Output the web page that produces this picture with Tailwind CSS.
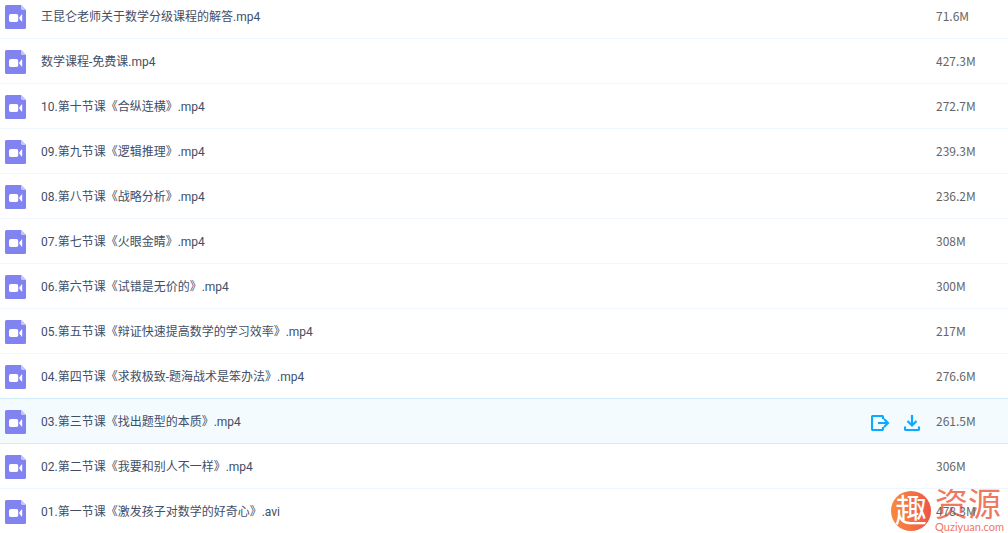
<!DOCTYPE html>
<html lang="zh-CN">
<head>
    <meta charset="UTF-8">
    <meta name="viewport" content="width=device-width, initial-scale=1.0">
    <title>数学课程 - 文件列表</title>
    <script src="https://cdn.jsdelivr.net/npm/@tailwindcss/browser@4"></script>
</head>
<body class="relative h-screen overflow-hidden bg-white font-[Roboto,'Noto_Sans_CJK_SC',sans-serif] text-xs text-[#424e67]">

    <!-- Shared icon shapes -->
    <svg class="hidden">
        <symbol id="video" viewBox="0 0 21 24">
            <path d="M1.500 0H16l5 5v17.500a1.500 1.500 0 0 1-1.500 1.500h-18A1.500 1.500 0 0 1 0 22.500V1.500A1.500 1.500 0 0 1 1.500 0z" fill="#8183f1"/>
            <path d="M16 0l5 5h-3.500A1.500 1.500 0 0 1 16 3.500z" fill="#c5c6fa"/>
            <rect x="4" y="9" width="9.200" height="8" rx="1.800" fill="#fff"/>
            <path d="M14 13l2.500-3.500h.7V16.500h-.7z" fill="#fff"/>
        </symbol>
    </svg>

    <!-- The list is scrolled a little under the top edge -->
    <table class="relative z-10 -mt-1.5 w-full table-fixed border-separate border-spacing-0">
        <colgroup>
            <col class="w-[41px]">
            <col>
            <col class="w-[72px]">
            <col class="w-[72px]">
        </colgroup>
        <tbody id="fileList"></tbody>
    </table>

    <!-- Site watermark, behind the list -->
    <div class="pointer-events-none absolute right-1 bottom-0 flex items-center gap-1 text-[#f0785f]">
        <div class="flex size-10 items-center justify-center rounded-full bg-linear-to-r from-[#f88a3c] to-[#ee5548] text-[32px] leading-10 text-white">趣</div>
        <div class="flex flex-col">
            <span class="text-[33px] leading-8">资源</span>
            <span class="font-[Lato,sans-serif] text-[11px] leading-3">Quziyuan.com</span>
        </div>
    </div>

    <script>
        const files = [
            { name: '王昆仑老师关于数学分级课程的解答.mp4', size: '71.6M' },
            { name: '数学课程-免费课.mp4', size: '427.3M' },
            { name: '10.第十节课《合纵连横》.mp4', size: '272.7M' },
            { name: '09.第九节课《逻辑推理》.mp4', size: '239.3M' },
            { name: '08.第八节课《战略分析》.mp4', size: '236.2M' },
            { name: '07.第七节课《火眼金睛》.mp4', size: '308M' },
            { name: '06.第六节课《试错是无价的》.mp4', size: '300M' },
            { name: '05.第五节课《辩证快速提高数学的学习效率》.mp4', size: '217M' },
            { name: '04.第四节课《求救极致-题海战术是笨办法》.mp4', size: '276.6M' },
            { name: '03.第三节课《找出题型的本质》.mp4', size: '261.5M', active: true },
            { name: '02.第二节课《我要和别人不一样》.mp4', size: '306M' },
            { name: '01.第一节课《激发孩子对数学的好奇心》.avi', size: '478.3M' },
        ];

        const actions = `
            <div class="flex items-center gap-3.5 pl-[7px] text-[#09aaff]">
                <button type="button" aria-label="分享" class="cursor-pointer">
                    <svg class="h-4 w-[19px]" viewBox="0 0 19 16" fill="none" stroke="currentColor" stroke-width="2.200">
                        <path d="M12 4V2a1 1 0 0 0-1-1H2a1 1 0 0 0-1 1v12a1 1 0 0 0 1 1h9a1 1 0 0 0 1-1v-2M7 8h10M13 4l4 4-4 4"/>
                    </svg>
                </button>
                <button type="button" aria-label="下载" class="cursor-pointer">
                    <svg class="size-4" viewBox="0 0 16 16" fill="none" stroke="currentColor" stroke-width="2.200">
                        <path d="M8 0v10M3.500 6L8 10.500 12.500 6M1 11.500V14a1 1 0 0 0 1 1h12a1 1 0 0 0 1-1v-2.500"/>
                    </svg>
                </button>
            </div>`;

        document.getElementById('fileList').innerHTML = files.map((file, i) => {
            // The active row is outlined, so the row above it takes the darker line too
            const outlined = file.active || (files[i + 1] && files[i + 1].active);
            const line = outlined ? '*:border-[#d3ebfb]' : '*:border-[#f0f6fd]';
            return `
                <tr class="h-[45px] *:border-b ${line} ${file.active ? 'bg-[#f3fbff]' : ''}">
                    <td class="pt-0.5 pl-[5px]"><svg class="h-6 w-[21px]"><use href="#video"/></svg></td>
                    <td class="truncate pt-0.5"><a href="#">${file.name}</a></td>
                    <td class="pt-1">${file.active ? actions : ''}</td>
                    <td class="font-['Noto_Sans_CJK_SC',sans-serif] text-[#666]">${file.size}</td>
                </tr>`;
        }).join('');
    </script>
</body>
</html>
